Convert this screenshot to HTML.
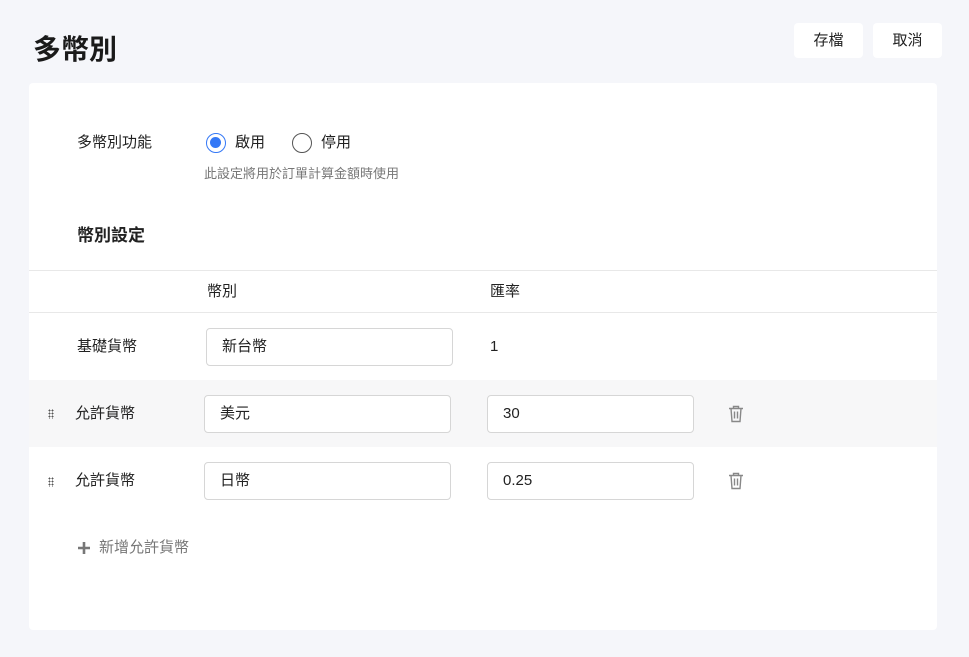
<!DOCTYPE html>
<html><head><meta charset="utf-8"><style>
*{box-sizing:border-box;margin:0;padding:0}
body{width:969px;height:657px;background:#f5f6fa;font-family:"Liberation Sans","Noto Sans CJK TC",sans-serif;color:#222;position:relative;overflow:hidden}
.abs{position:absolute}
h1{position:absolute;left:33px;top:30px;font-size:28px;font-weight:700;color:#1a1a1a;line-height:40px}
.btn{position:absolute;top:23px;height:35px;width:69px;background:#fff;border-radius:4px;font-size:15px;text-align:center;line-height:35px;color:#222}
.card{position:absolute;left:29px;top:83px;width:908px;height:547px;background:#fff;border-radius:4px}
.t{position:absolute;font-size:15px;line-height:20px;white-space:nowrap}
.radio{position:absolute;width:20px;height:20px;border-radius:50%;border:1.5px solid #555;background:#fff}
.inp{position:absolute;height:38px;border:1px solid #d6d6d6;border-radius:4px;background:#fff;font-size:15px;line-height:36px;padding-left:15px}
.line{position:absolute;left:0;width:908px;height:1px;background:#e8e8e8}
.dots{position:absolute;width:6px;height:10px;background:radial-gradient(circle,#555 0.8px,transparent 1px) 0 0/3px 3px}
</style></head><body>
<h1>多幣別</h1>
<div class="btn" style="left:794px">存檔</div>
<div class="btn" style="left:873px">取消</div>
<div class="card">
 <div class="t" style="left:48px;top:50px">多幣別功能</div>
 <div class="radio" style="left:177px;top:50px;border-color:#3478f6;border-width:1.5px"><div style="position:absolute;left:3px;top:3px;width:11px;height:11px;border-radius:50%;background:#3478f6"></div></div>
 <div class="t" style="left:206px;top:50px">啟用</div>
 <div class="radio" style="left:263px;top:50px"></div>
 <div class="t" style="left:292px;top:50px">停用</div>
 <div class="t" style="left:175px;top:81px;font-size:13px;color:#777">此設定將用於訂單計算金額時使用</div>
 <div class="t" style="left:48px;top:143px;font-size:17px;font-weight:700">幣別設定</div>
 <div class="line" style="top:187px"></div>
 <div class="t" style="left:178px;top:199px">幣別</div>
 <div class="t" style="left:461px;top:199px">匯率</div>
 <div class="line" style="top:229px"></div>
 <div class="t" style="left:48px;top:254px">基礎貨幣</div>
 <div class="inp" style="left:177px;top:245px;width:247px">新台幣</div>
 <div class="t" style="left:461px;top:254px">1</div>
 <div class="abs" style="left:0;top:297px;width:908px;height:67px;background:#f7f7f8"></div>
 <div class="dots" style="left:19px;top:326px"></div>
 <div class="t" style="left:46px;top:321px">允許貨幣</div>
 <div class="inp" style="left:175px;top:312px;width:247px">美元</div>
 <div class="inp" style="left:458px;top:312px;width:207px">30</div>
 <svg class="abs" style="left:699px;top:322px" width="16" height="18" viewBox="0 0 16 18" fill="none" stroke="#888" stroke-width="1.4"><path d="M1 3.5h14M5.5 3.5V1.5h5v2M3 3.5l1 13h8l1-13M6.5 6.5v7M9.5 6.5v7"/></svg>
 <div class="dots" style="left:19px;top:394px"></div>
 <div class="t" style="left:46px;top:388px">允許貨幣</div>
 <div class="inp" style="left:175px;top:379px;width:247px">日幣</div>
 <div class="inp" style="left:458px;top:379px;width:207px">0.25</div>
 <svg class="abs" style="left:699px;top:389px" width="16" height="18" viewBox="0 0 16 18" fill="none" stroke="#888" stroke-width="1.4"><path d="M1 3.5h14M5.5 3.5V1.5h5v2M3 3.5l1 13h8l1-13M6.5 6.5v7M9.5 6.5v7"/></svg>
 <svg class="abs" style="left:48px;top:458px" width="14" height="14" viewBox="0 0 14 14"><path d="M7 1v12M1 7h12" stroke="#777" stroke-width="2.6"/></svg>
 <div class="t" style="left:70px;top:455px;color:#777">新增允許貨幣</div>
</div>
</body></html>
